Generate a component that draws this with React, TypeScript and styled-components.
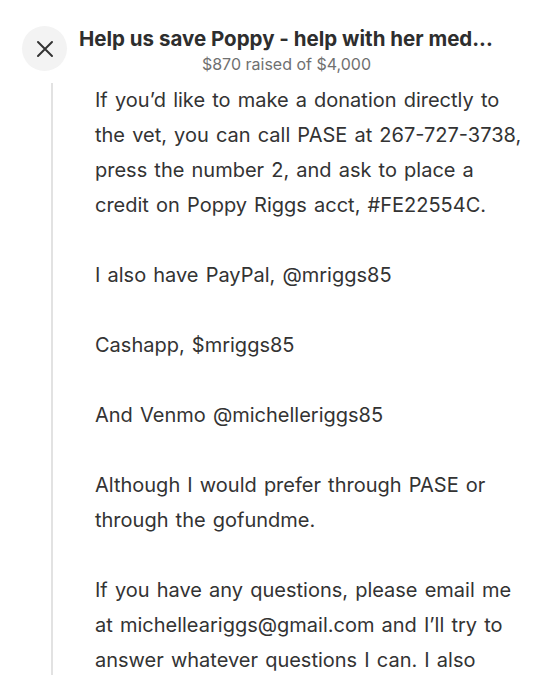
import React from "react";
import styled, { createGlobalStyle } from "styled-components";

const Global = createGlobalStyle`
  html, body { margin: 0; padding: 0; background: #ffffff; }
  body { font-family: Inter, "Open Sans", Arial, sans-serif; color: #333; }
`;

const Page = styled.div`
  width: 540px;
  height: 675px;
  overflow: hidden;
  background: #fff;
`;

const Header = styled.header`
  display: flex;
  align-items: flex-start;
  padding: 26px 0 0 22px;
  gap: 12px;
`;

const CloseButton = styled.button`
  width: 45px;
  height: 45px;
  border-radius: 50%;
  border: none;
  background: #f3f3f3;
  display: flex;
  align-items: center;
  justify-content: center;
  padding: 0;
  flex-shrink: 0;
`;

const TitleBlock = styled.div`
  display: flex;
  flex-direction: column;
  width: 415px;
`;

const Title = styled.h1`
  margin: 0;
  font-size: 20.5px;
  line-height: 26px;
  font-weight: 700;
  color: #2e2e2e;
  white-space: nowrap;
  align-self: flex-start;
`;

const Subtitle = styled.div`
  margin-top: 2px;
  font-size: 16px;
  line-height: 20px;
  color: #707070;
  align-self: center;
`;

const Body = styled.div`
  margin: 13px 0 0 51px;
  border-left: 2px solid #e2e2e2;
  padding: 0 0 0 42px;
  height: 600px;
`;

const Content = styled.div`
  margin-top: -4px;
`;

const Paragraph = styled.p`
  margin: 0 0 35px;
  font-size: 20px;
  word-spacing: 1.5px;
  line-height: 35px;
  color: #333;
  white-space: nowrap;
`;

export default function App() {
  return (
    <Page>
      <Global />
      <Header>
        <CloseButton aria-label="Close">
          <svg width="18" height="18" viewBox="0 0 18 18" fill="none" stroke="#333" strokeWidth="2" strokeLinecap="round">
            <path d="M2 2 L16 16 M16 2 L2 16" />
          </svg>
        </CloseButton>
        <TitleBlock>
          <Title>Help us save Poppy - help with her med...</Title>
          <Subtitle>$870 raised of $4,000</Subtitle>
        </TitleBlock>
      </Header>
      <Body>
        <Content>
          <Paragraph>
            If you’d like to make a donation directly to<br />
            the vet, you can call PASE at 267-727-3738,<br />
            press the number 2, and ask to place a<br />
            credit on Poppy Riggs acct, #FE22554C.
          </Paragraph>
          <Paragraph>I also have PayPal, @mriggs85</Paragraph>
          <Paragraph>Cashapp, $mriggs85</Paragraph>
          <Paragraph>And Venmo @michelleriggs85</Paragraph>
          <Paragraph>
            Although I would prefer through PASE or<br />
            through the gofundme.
          </Paragraph>
          <Paragraph>
            If you have any questions, please email me<br />
            at michelleariggs@gmail.com and I’ll try to<br />
            answer whatever questions I can. I also
          </Paragraph>
        </Content>
      </Body>
    </Page>
  );
}
